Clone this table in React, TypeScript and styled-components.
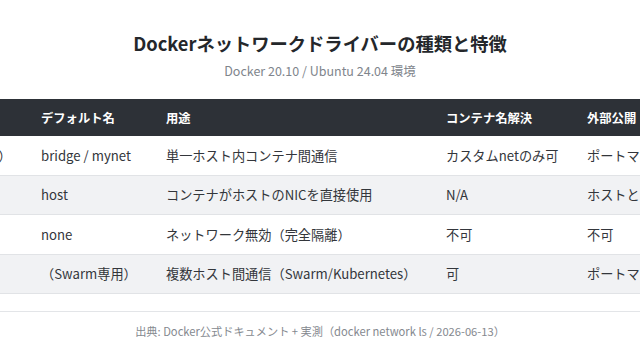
import React from 'react'
import styled, { createGlobalStyle } from 'styled-components'

interface IRow {
    driver: string
    name: string
    purpose: string
    resolve: string
    expose: string
}

const columns = ['ドライバー', 'デフォルト名', '用途', 'コンテナ名解決', '外部公開']
const widths = [122, 125, 280, 141, 166]

const rows: IRow[] = [
    { driver: 'bridge（既定）', name: 'bridge / mynet', purpose: '単一ホスト内コンテナ間通信', resolve: 'カスタムnetのみ可', expose: 'ポートマッピング' },
    { driver: 'host', name: 'host', purpose: 'コンテナがホストのNICを直接使用', resolve: 'N/A', expose: 'ホストと同一' },
    { driver: 'none', name: 'none', purpose: 'ネットワーク無効（完全隔離）', resolve: '不可', expose: '不可' },
    { driver: 'overlay', name: '（Swarm専用）', purpose: '複数ホスト間通信（Swarm/Kubernetes）', resolve: '可', expose: 'ポートマッピング' },
]

const App: React.FC = () => {
    return (
        <>
            <GlobalStyle />
            <Page>
                <Title>Dockerネットワークドライバーの種類と特徴</Title>
                <Subtitle>Docker 20.10 / Ubuntu 24.04 環境</Subtitle>
                <Table>
                    <colgroup>
                        {widths.map((w, i) => <col key={i} style={{ width: w }} />)}
                    </colgroup>
                    <thead>
                        <tr>
                            {columns.map((c) => <Th key={c}>{c}</Th>)}
                        </tr>
                    </thead>
                    <tbody>
                        {rows.map((r, i) => (
                            <Row key={r.driver} $striped={i % 2 === 1}>
                                <Td>{r.driver}</Td>
                                <Td>{r.name}</Td>
                                <Td>{r.purpose}</Td>
                                <Td>{r.resolve}</Td>
                                <Td>{r.expose}</Td>
                            </Row>
                        ))}
                    </tbody>
                </Table>
                <Footer>出典: Docker公式ドキュメント + 実測（docker network ls / 2026-06-13）</Footer>
            </Page>
        </>
    )
}

export default App

const GlobalStyle = createGlobalStyle`
    html, body {
        margin: 0;
        padding: 0;
        background: #ffffff;
        overflow: hidden;
    }

    body {
        font-family: "Noto Sans CJK JP", "Noto Sans", sans-serif;
    }
`

const Page = styled.div`
    width: 640px;
    height: 360px;
    display: flex;
    flex-direction: column;
    align-items: center;
    padding-top: 31px;
    box-sizing: border-box;
`

const Title = styled.h1`
    margin: 0;
    font-size: 18.3px;
    line-height: 24px;
    font-weight: 700;
    color: #24272b;
`

const Subtitle = styled.div`
    margin-top: 7px;
    font-size: 12.5px;
    line-height: 18px;
    color: #80858c;
`

const Table = styled.table`
    flex: none;
    margin-top: 19px;
    width: 834px;
    table-layout: fixed;
    border-collapse: collapse;
    font-size: 13.2px;
    color: #33363b;
`

const Th = styled.th`
    height: 37px;
    padding: 0 16px;
    text-align: left;
    font-size: 12.3px;
    font-weight: 700;
    color: #ffffff;
    background: #2d3137;
    white-space: nowrap;
`

const Row = styled.tr<{ $striped: boolean }>`
    background: ${(p) => (p.$striped ? '#f1f2f4' : '#ffffff')};
    border-bottom: 1px solid #e1e3e6;
`

const Td = styled.td`
    height: 38.5px;
    padding: 0 16px;
    white-space: nowrap;
`

const Footer = styled.div`
    align-self: stretch;
    margin-top: 17px;
    padding-top: 11px;
    border-top: 1px solid #e3e5e8;
    text-align: center;
    font-size: 11.2px;
    line-height: 16px;
    color: #85898f;
`
